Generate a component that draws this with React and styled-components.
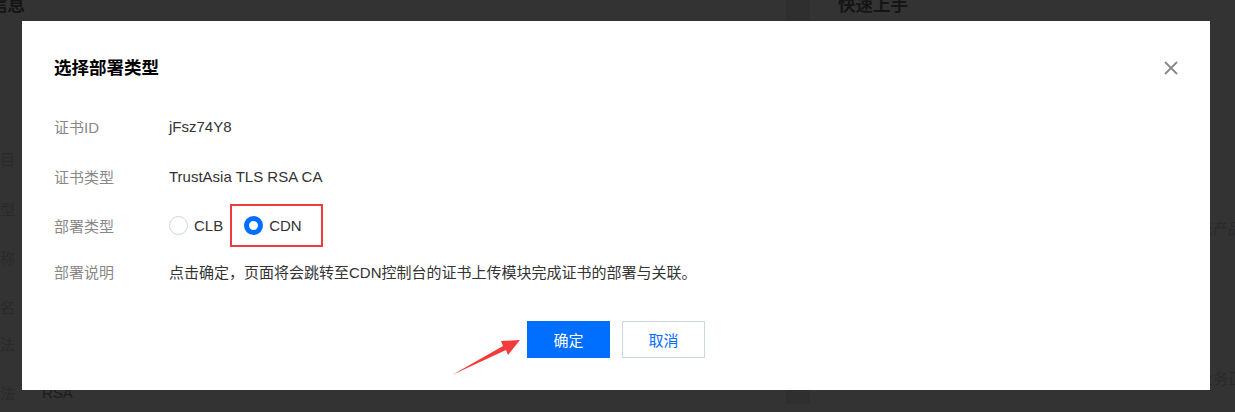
import React, { useState } from "react";
import styled, { createGlobalStyle } from "styled-components";

const GlobalStyle = createGlobalStyle`
  html, body {
    margin: 0;
    padding: 0;
    background: #333333;
    overflow: hidden;
  }
  body {
    font-family: "Liberation Sans", "Noto Sans CJK SC", sans-serif;
  }
  * {
    box-sizing: border-box;
  }
`;

const leftRows = [
  { label: "所属项目", top: 129 },
  { label: "证书类型", top: 28 },
  { label: "通用名称", top: 27 },
  { label: "绑定域名", top: 27 },
  { label: "验证方法", top: 15 },
  { label: "加密算法", value: "RSA", top: 27 },
];

const App = () => {
  const [type, setType] = useState("CDN");

  return (
    <>
      <GlobalStyle />
      <Page>
        <LeftPanel>
          <PanelInner>
            <PanelTitle>基本信息</PanelTitle>
            {leftRows.map((row, i) => (
              <InfoRow key={`row-${i}`} $top={row.top}>
                <InfoLabel>{row.label}</InfoLabel>
                <InfoValue>{row.value}</InfoValue>
              </InfoRow>
            ))}
          </PanelInner>
        </LeftPanel>
        <Gutter />
        <RightPanel>
          <PanelTitle>快速上手</PanelTitle>
          <GuideText $top={200}>
            证书签发后，您可以将证书一键部署至负载均衡等多个云产品。
          </GuideText>
          <GuideText $top={128}>
            证书即将到期时请及时续费并重新部署，以免影响网站业务正常运行。
          </GuideText>
        </RightPanel>
      </Page>

      <Overlay>
        <Modal>
          <Header>
            <Title>选择部署类型</Title>
            <CloseButton aria-label="关闭">
              <svg width="14" height="14" viewBox="0 0 14 14">
                <path
                  d="M1 1 L13 13 M13 1 L1 13"
                  stroke="#888888"
                  strokeWidth="1.8"
                  fill="none"
                />
              </svg>
            </CloseButton>
          </Header>

          <Body>
            <FormRow $top={35}>
              <FormLabel>证书ID</FormLabel>
              <FormValue>jFsz74Y8</FormValue>
            </FormRow>
            <FormRow $top={28}>
              <FormLabel>证书类型</FormLabel>
              <FormValue>TrustAsia TLS RSA CA</FormValue>
            </FormRow>
            <FormRow $top={16} $tall>
              <FormLabel>部署类型</FormLabel>
              <RadioGroup>
                {["CLB", "CDN"].map((opt) => (
                  <RadioOption
                    key={opt}
                    $highlight={opt === "CDN"}
                    onClick={() => setType(opt)}
                  >
                    <RadioCircle $checked={type === opt} />
                    <RadioText>{opt}</RadioText>
                  </RadioOption>
                ))}
              </RadioGroup>
            </FormRow>
            <FormRow $top={14}>
              <FormLabel>部署说明</FormLabel>
              <FormValue>
                点击确定，页面将会跳转至CDN控制台的证书上传模块完成证书的部署与关联。
              </FormValue>
            </FormRow>
          </Body>

          <Footer>
            <Button $primary>确定</Button>
            <Button>取消</Button>
          </Footer>

          <Arrow width="72" height="40" viewBox="0 0 72 40">
            <polygon
              points="2,37 53,8 51,3 70,2 58,17 56,12"
              fill="#f33b3b"
            />
          </Arrow>
        </Modal>
      </Overlay>
    </>
  );
};

const Page = styled.div`
  display: grid;
  grid-template-columns: 786px 24px 1fr;
  height: 100vh;
  margin-top: -8px;
  overflow: hidden;
`;

const LeftPanel = styled.div`
  background: #333333;
  overflow: hidden;
`;

const PanelInner = styled.div`
  margin-left: -45px;
`;

const PanelTitle = styled.h2`
  margin: 0;
  font-size: 17.5px;
  line-height: 26px;
  font-weight: 700;
  color: #151515;
  white-space: nowrap;
`;

const InfoRow = styled.div`
  display: flex;
  align-items: center;
  height: 22px;
  margin-top: ${(p) => p.$top}px;
  font-size: 15px;
`;

const InfoLabel = styled.span`
  width: 87px;
  color: #2a2a2a;
`;

const InfoValue = styled.span`
  color: #1c1c1c;
`;

const Gutter = styled.div`
  background: #2f2f2f;
`;

const RightPanel = styled.div`
  background: #333333;
  padding-left: 28px;
  overflow: hidden;
`;

const GuideText = styled.p`
  margin: ${(p) => p.$top}px 0 0;
  font-size: 15px;
  line-height: 22px;
  color: #2a2a2a;
  white-space: nowrap;
`;

const Overlay = styled.div`
  position: fixed;
  inset: 0;
  display: flex;
  align-items: center;
  justify-content: center;
  padding: 0 3px 2px 0;
`;

const Modal = styled.div`
  position: relative;
  width: 1188px;
  height: 369px;
  flex-shrink: 0;
  background: #ffffff;
  padding: 34px 32px 32px;
  display: flex;
  flex-direction: column;
`;

const Header = styled.div`
  display: flex;
  align-items: center;
  justify-content: space-between;
  height: 26px;
`;

const Title = styled.h3`
  margin: 0;
  font-size: 17.5px;
  line-height: 26px;
  font-weight: 700;
  color: #000000;
`;

const CloseButton = styled.button`
  border: none;
  background: none;
  padding: 0;
  width: 14px;
  height: 14px;
  display: flex;
  cursor: pointer;
`;

const Body = styled.div`
  display: flex;
  flex-direction: column;
`;

const FormRow = styled.div`
  display: flex;
  align-items: center;
  height: ${(p) => (p.$tall ? 43 : 22)}px;
  margin-top: ${(p) => p.$top}px;
  font-size: 15px;
`;

const FormLabel = styled.span`
  width: 115px;
  flex-shrink: 0;
  color: #888888;
`;

const FormValue = styled.span`
  color: #333333;
`;

const RadioGroup = styled.div`
  display: flex;
  align-items: center;
  gap: 7px;
  height: 100%;
`;

const RadioOption = styled.label`
  display: flex;
  align-items: center;
  gap: 6px;
  height: 100%;
  cursor: pointer;
  ${(p) =>
    p.$highlight &&
    `
    border: 2px solid #ef3b3b;
    padding: 0 19px 0 12px;
  `}
`;

const RadioCircle = styled.span`
  width: 19px;
  height: 19px;
  border-radius: 50%;
  background: #ffffff;
  border: ${(p) => (p.$checked ? "5px solid #006eff" : "1px solid #cfd5de")};
`;

const RadioText = styled.span`
  color: #333333;
  font-size: 15px;
`;

const Footer = styled.div`
  display: flex;
  justify-content: center;
  gap: 12px;
  margin-top: auto;
`;

const Button = styled.button`
  width: 83px;
  height: 37px;
  font-family: "Liberation Sans", "Noto Sans CJK SC", sans-serif;
  font-size: 15px;
  cursor: pointer;
  border: 1px solid ${(p) => (p.$primary ? "#006eff" : "#cfd5de")};
  background: ${(p) => (p.$primary ? "#006eff" : "#ffffff")};
  color: ${(p) => (p.$primary ? "#ffffff" : "#006eff")};
`;

const Arrow = styled.svg`
  position: absolute;
  left: 428px;
  top: 317px;
`;

export default App;
